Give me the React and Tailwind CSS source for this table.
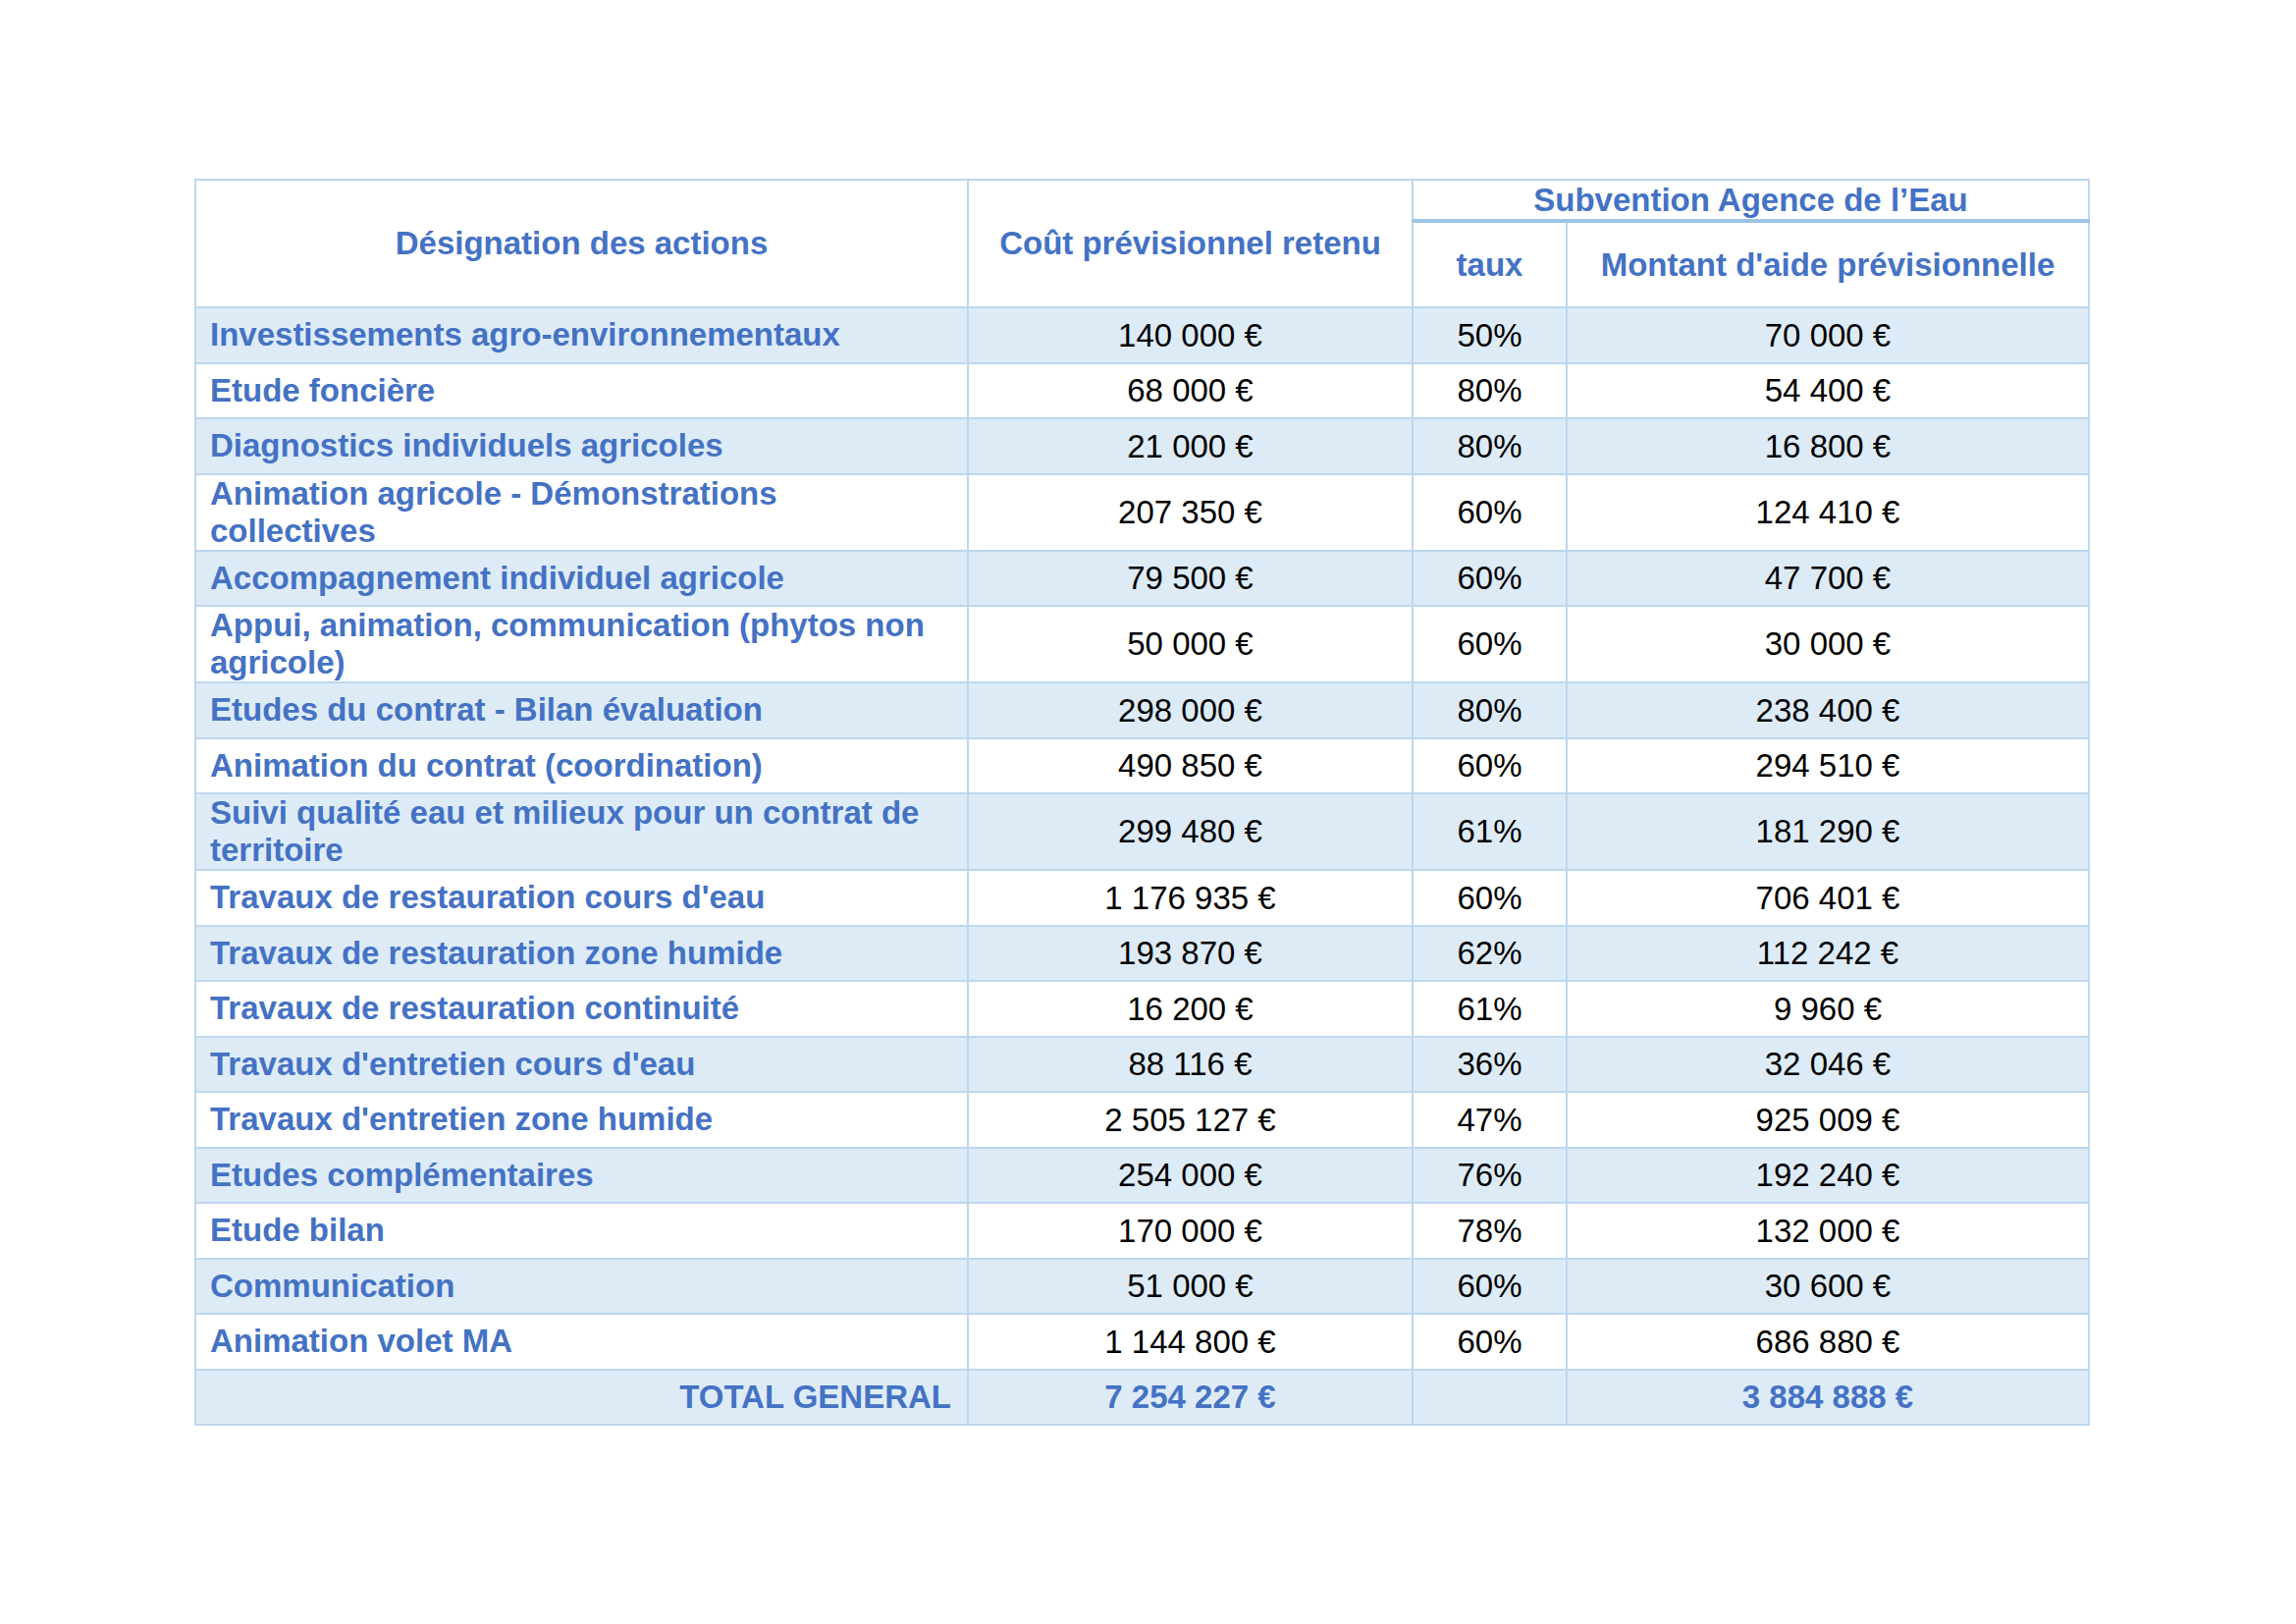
const rows = [
  ["Investissements agro-environnementaux", "140 000 €", "50%", "70 000 €"],
  ["Etude foncière", "68 000 €", "80%", "54 400 €"],
  ["Diagnostics individuels agricoles", "21 000 €", "80%", "16 800 €"],
  ["Animation agricole - Démonstrations collectives", "207 350 €", "60%", "124 410 €", true],
  ["Accompagnement individuel agricole", "79 500 €", "60%", "47 700 €"],
  ["Appui, animation, communication (phytos non agricole)", "50 000 €", "60%", "30 000 €", true],
  ["Etudes du contrat - Bilan évaluation", "298 000 €", "80%", "238 400 €"],
  ["Animation du contrat (coordination)", "490 850 €", "60%", "294 510 €"],
  ["Suivi qualité eau et milieux pour un contrat de territoire", "299 480 €", "61%", "181 290 €", true],
  ["Travaux de restauration cours d'eau", "1 176 935 €", "60%", "706 401 €"],
  ["Travaux de restauration zone humide", "193 870 €", "62%", "112 242 €"],
  ["Travaux de restauration continuité", "16 200 €", "61%", "9 960 €"],
  ["Travaux d'entretien cours d'eau", "88 116 €", "36%", "32 046 €"],
  ["Travaux d'entretien zone humide", "2 505 127 €", "47%", "925 009 €"],
  ["Etudes complémentaires", "254 000 €", "76%", "192 240 €"],
  ["Etude bilan", "170 000 €", "78%", "132 000 €"],
  ["Communication", "51 000 €", "60%", "30 600 €"],
  ["Animation volet MA", "1 144 800 €", "60%", "686 880 €"],
];

const cell = "border-2 border-[#bdd7ee] p-0";

export default function App() {
  return (
    <div className="min-h-screen bg-white pt-[182px] pl-[198px] font-['Liberation_Sans',Arial,sans-serif] text-[33px]">
      <table className="border-collapse border-2 border-[#bdd7ee] table-fixed w-[1929px]">
        <colgroup>
          <col className="w-[787px]" />
          <col className="w-[453px]" />
          <col className="w-[157px]" />
          <col className="w-[532px]" />
        </colgroup>
        <thead>
          <tr className="h-[42px]">
            <th rowSpan={2} className={`${cell} text-[#4472c4] font-bold`}>
              Désignation des actions
            </th>
            <th rowSpan={2} className={`${cell} text-[#4472c4] font-bold`}>
              Coût prévisionnel retenu
            </th>
            <th
              colSpan={2}
              className="border-2 border-[#bdd7ee] border-b-4 border-b-[#9dc3e6] p-0 text-[#4472c4] font-bold leading-none"
            >
              Subvention Agence de l’Eau
            </th>
          </tr>
          <tr className="h-[88px]">
            <th className={`${cell} text-[#4472c4] font-bold`}>taux</th>
            <th className={`${cell} text-[#4472c4] font-bold`}>
              Montant d'aide prévisionnelle
            </th>
          </tr>
        </thead>
        <tbody>
          {rows.map((r, idx) => (
            <tr
              key={idx}
              className={`${r[4] ? "h-[78px]" : "h-[56.5px]"} ${
                idx % 2 === 0 ? "bg-[#ddebf7]" : "bg-white"
              }`}
            >
              <td className={`${cell} pl-[14px] pr-[30px] text-[#4472c4] font-bold leading-[38px]`}>
                {r[0]}
              </td>
              <td className={`${cell} text-center text-black`}>{r[1]}</td>
              <td className={`${cell} text-center text-black`}>{r[2]}</td>
              <td className={`${cell} text-center text-black`}>{r[3]}</td>
            </tr>
          ))}
          <tr className="h-[56.5px] bg-[#ddebf7] text-[#4472c4] font-bold">
            <td className={`${cell} text-right pr-4`}>TOTAL GENERAL</td>
            <td className={`${cell} text-center`}>7 254 227 €</td>
            <td className={cell}></td>
            <td className={`${cell} text-center`}>3 884 888 €</td>
          </tr>
        </tbody>
      </table>
    </div>
  );
}
